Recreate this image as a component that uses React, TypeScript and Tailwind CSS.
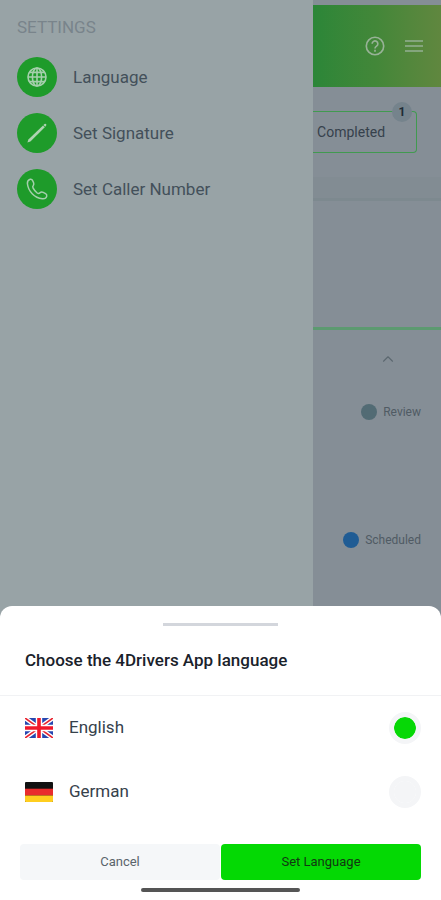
import React, { useState } from 'react'
import { ChevronUp } from 'lucide-react'

const GlobeIcon = () => (
  <svg viewBox="0 0 24 24" className="size-6" fill="none" stroke="#a5cfac" strokeWidth="1.6">
    <circle cx="12" cy="12" r="9" />
    <ellipse cx="12" cy="12" rx="4.6" ry="9" />
    <path d="M12 3v18M3 12h18M4.200 7.400h15.600M4.200 16.600h15.600" />
  </svg>
)

const PenIcon = () => (
  <svg viewBox="0 0 24 24" className="size-6" fill="#aed3b2">
    <path d="M2.400 21.400 3.400 18.400 18 4.500 19.800 6.300 5.400 20.400Z" />
    <path d="M18.400 4 19.500 3Q20.300 2.400 21 3.100 21.700 3.900 21.100 4.700L20.200 5.800Z" />
  </svg>
)

const PhoneIcon = () => (
  <svg viewBox="0 0 24 24" className="size-6" fill="none" stroke="#a5cfac" strokeWidth="1.5" strokeLinejoin="round">
    <path d="M5.200 2.200C3.500 2.600 2.300 4.300 2.400 6.500 3.100 14.200 9.600 20.900 17.300 21.800c2.300.2 4-.9 4.400-2.400.3-1.200-.1-2.200-1.100-2.800l-2.400-1.200c-1.200-.6-2.400-.4-3.200.4-.8.9-1.800 1-2.800.2C10.200 14.300 8.800 12.600 8 10.900 7.500 9.900 7.700 9.200 8.300 8.500c.6-.8.7-1.700.3-2.700L7.500 3.400C7.100 2.400 6.200 2 5.200 2.200Z" />
  </svg>
)

const FlagUK = () => (
  <svg viewBox="0 0 28 20" className="h-5 w-7 shrink-0">
    <rect width="28" height="20" rx="1" fill="#2747b0" />
    <path d="M0 0 28 20M28 0 0 20" stroke="#fff" strokeWidth="4.400" />
    <path d="M0 0 28 20M28 0 0 20" stroke="#e8232f" strokeWidth="1.600" />
    <path d="M14 0v20M0 10h28" stroke="#fff" strokeWidth="6.400" />
    <path d="M14 0v20M0 10h28" stroke="#f0182b" strokeWidth="3.600" />
  </svg>
)

const FlagDE = () => (
  <svg viewBox="0 0 28 20" className="h-5 w-7 shrink-0">
    <rect width="28" height="20" rx="1" fill="#111" />
    <path d="M0 6.700h28v6.800H0Z" fill="#e92d2d" />
    <path d="M0 13.500h28V19q0 1-1 1H1q-1 0-1-1Z" fill="#ffce1f" />
  </svg>
)

const settings = [
  { label: 'Language', icon: <GlobeIcon /> },
  { label: 'Set Signature', icon: <PenIcon /> },
  { label: 'Set Caller Number', icon: <PhoneIcon /> },
]

const languages = [
  { id: 'en', label: 'English', flag: <FlagUK /> },
  { id: 'de', label: 'German', flag: <FlagDE /> },
]

function Drawer() {
  return (
    <aside className="w-[71%] shrink-0 bg-[#98a3a6] px-[17px] pt-[15px]">
      <h2 className="text-[17px] leading-6 text-[#79848b]">SETTINGS</h2>
      <nav className="mt-[18px] flex flex-col gap-4">
        {settings.map((item) => (
          <button key={item.label} type="button" className="flex items-center gap-4 text-left">
            <span className="flex size-10 items-center justify-center rounded-full bg-[#1e9b2a]">{item.icon}</span>
            <span className="text-[17px] leading-6 text-[#43505a]">{item.label}</span>
          </button>
        ))}
      </nav>
    </aside>
  )
}

function Jobs() {
  return (
    <main className="min-w-0 flex-1 bg-[#858e96] pt-[5px] text-[#505b64]">
      <header className="flex h-[82px] items-center justify-end gap-[18px] bg-linear-to-r from-[#2b8638] via-[#438739] to-[#60873f] pr-[17px]">
        <button type="button" aria-label="Help">
          <svg viewBox="0 0 24 24" className="size-[22px]" fill="none" stroke="#98b297" strokeWidth="1.800">
            <circle cx="12" cy="12" r="9.500" />
            <path d="M8.900 9.600a3.100 3.100 0 1 1 4.800 2.600c-1 .7-1.700 1.200-1.700 2.400M12 16.200v2" />
          </svg>
        </button>
        <button type="button" aria-label="Menu">
          <svg viewBox="0 0 20 14" className="h-[14px] w-5" stroke="#94b092" strokeWidth="1.600">
            <path d="M1 2h18M1 7h18M1 12h18" />
          </svg>
        </button>
      </header>
      <div className="pt-6 pr-6">
        <button type="button" className="relative flex h-[42px] w-full items-center rounded-r border border-l-0 border-[#419a50] pl-1 text-sm text-[#36414c]">
          Completed
          <span className="absolute -top-[10px] right-1 flex size-5 items-center justify-center rounded-full bg-[#75838c] text-xs font-bold text-[#202b35]">1</span>
        </button>
      </div>
      <div className="mt-6 h-6 border-b-3 border-[#7d898f] bg-[#828c93]" />
      <div className="h-[129px] border-b-3 border-[#5c9a70]" />
      <section className="flex flex-col items-end pt-5 pr-5 text-xs leading-4">
        <button type="button" aria-label="Collapse" className="mr-6">
          <ChevronUp className="size-[18px] text-[#5c6870]" strokeWidth={1.5} />
        </button>
        <p className="mt-9 flex items-center gap-[6px]">
          <span className="size-4 rounded-full bg-[#526b74]" />
          Review
        </p>
        <p className="mt-28 flex items-center gap-[6px]">
          <span className="size-4 rounded-full bg-[#205c94]" />
          Scheduled
        </p>
      </section>
    </main>
  )
}

function LanguageSheet() {
  const [lang, setLang] = useState('en')

  return (
    <form className="relative -mt-4 rounded-t-xl bg-white pt-[17px] pb-2" onSubmit={(e) => e.preventDefault()}>
      <div className="mx-auto h-[3px] w-[26%] bg-[#d3d6dc]" />
      <h1 className="border-b border-[#f1f2f4] px-[25px] pt-[22px] pb-[23px] text-[17px] leading-6 font-medium text-[#1a222b]">
        Choose the 4Drivers App language
      </h1>
      <div role="radiogroup" aria-label="App language">
        {languages.map((l) => (
          <label key={l.id} className="flex h-16 items-center gap-4 pr-5 pl-[25px]">
            {l.flag}
            <span className="flex-1 text-[17px] text-[#36414b]">{l.label}</span>
            <input
              type="radio"
              name="language"
              value={l.id}
              checked={lang === l.id}
              onChange={() => setLang(l.id)}
              className="size-8 appearance-none rounded-full border-5 border-[#f4f5f7] bg-[#f4f5f7] checked:bg-[#06d806] bg-clip-padding"
            />
          </label>
        ))}
      </div>
      <div className="mt-5 flex gap-px px-5 text-[13px]">
        <button type="button" className="h-9 flex-1 rounded-sm bg-[#f5f7f9] text-[#5a646b]">Cancel</button>
        <button type="submit" className="h-9 flex-1 rounded-sm bg-[#04d904] text-[#123812]">Set Language</button>
      </div>
      <div className="mx-auto mt-2 h-1 w-[36%] rounded-full bg-[#555]" />
    </form>
  )
}

export default function App() {
  return (
    <div className="flex min-h-screen flex-col bg-white font-[Roboto,sans-serif]">
      <div className="flex flex-1">
        <Drawer />
        <Jobs />
      </div>
      <LanguageSheet />
    </div>
  )
}
